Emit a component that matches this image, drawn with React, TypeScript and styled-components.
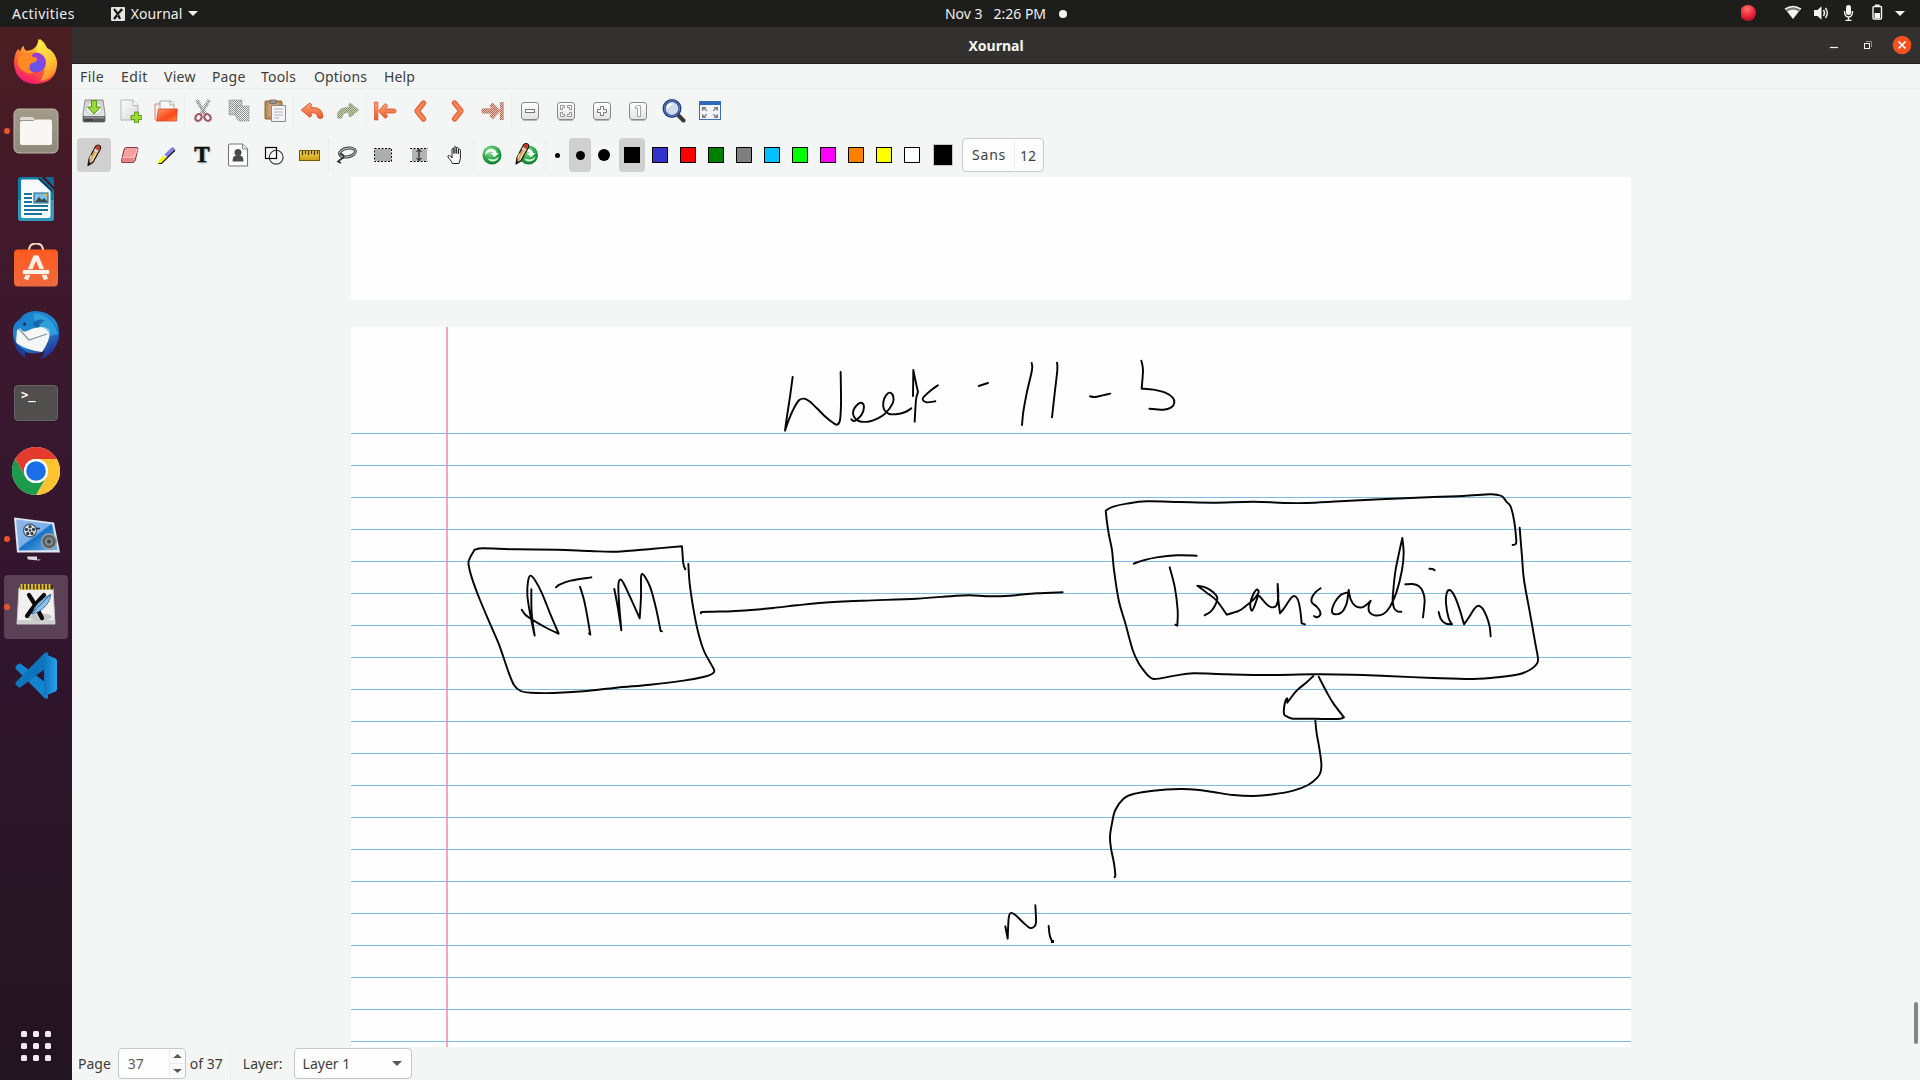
import React from 'react';
import styled, { createGlobalStyle } from 'styled-components';

const GlobalStyle = createGlobalStyle`
  * { box-sizing: border-box; }
  html, body { margin: 0; padding: 0; overflow: hidden; background: #f4f5f5; }
  svg { display: block; }
`;

const Desktop = styled.div`
  width: 1920px;
  height: 1080px;
  display: flex;
  flex-direction: column;
  font-family: 'Noto Sans', 'Open Sans', sans-serif;
  font-size: 14px;
  color: #3d3d3d;
  overflow: hidden;
`;

const TopBar = styled.header`
  height: 27px;
  flex: none;
  display: grid;
  grid-template-columns: 1fr auto 1fr;
  align-items: center;
  background: #1d1d1b;
  color: #f0f0ee;
  line-height: 26px;
`;
const TopLeft = styled.div`
  display: flex;
  align-items: center;
  padding-left: 12px;
`;
const AppMenu = styled.div`
  display: flex;
  align-items: center;
  margin-left: 36px;
  gap: 6px;
`;
const Clock = styled.div`
  display: flex;
  align-items: center;
  padding-left: 92px;
`;
const ClockDot = styled.i`
  width: 8px;
  height: 8px;
  border-radius: 50%;
  background: #f4f4f4;
  margin-left: 13px;
`;
const Tray = styled.div`
  display: flex;
  justify-content: flex-end;
  padding-right: 13px;
`;
const Text = styled.span<{ $ls?: number }>`
  letter-spacing: ${(p) => p.$ls ?? 0}px;
  white-space: pre;
`;

const Body = styled.div`
  flex: 1;
  display: flex;
  min-height: 0;
`;
const Dock = styled.nav`
  width: 72px;
  flex: none;
  display: flex;
  flex-direction: column;
  align-items: center;
  padding-top: 4px;
  gap: 4px;
  background: linear-gradient(180deg, #4b1e22 0%, #43192a 16%, #38182e 36%, #30152c 60%, #271523 85%, #221420 100%);
`;
const Tile = styled.div<{ $active?: boolean; $running?: boolean }>`
  width: 64px;
  height: 64px;
  flex: none;
  position: relative;
  border-radius: 4px;
  display: grid;
  place-items: center;
  background: ${(p) => (p.$active ? '#5a4156' : 'transparent')};
  &::before {
    content: '';
    display: ${(p) => (p.$running ? 'block' : 'none')};
    position: absolute;
    left: 0;
    top: 29px;
    width: 6px;
    height: 6px;
    border-radius: 50%;
    background: #ea5428;
  }
`;
const AppsGrid = styled.div`
  margin: auto 0 19px;
  display: grid;
  grid-template-columns: repeat(3, 6px);
  gap: 6px;
`;
const AppsDot = styled.i`
  width: 6px;
  height: 6px;
  border-radius: 1.5px;
  background: #f6eaf2;
`;

const Window = styled.main`
  flex: 1;
  min-width: 0;
  display: flex;
  flex-direction: column;
  background: #f4f5f5;
`;
const TitleBar = styled.div`
  height: 37px;
  flex: none;
  display: grid;
  grid-template-columns: 1fr auto 1fr;
  align-items: center;
  background: #323130;
  border-bottom: 1px solid #1f1e1d;
  color: #f6f6f4;
  font-weight: 700;
`;
const WindowButtons = styled.div`
  display: flex;
  justify-content: flex-end;
  padding-right: 8px;
`;
const MenuBar = styled.div`
  height: 25px;
  flex: none;
  display: flex;
  align-items: center;
  padding-left: 8px;
  border-bottom: 1px solid #eceeee;
`;
const MenuItem = styled.span<{ $w: number; $ls?: number }>`
  width: ${(p) => p.$w}px;
  letter-spacing: ${(p) => p.$ls ?? 0.15}px;
  line-height: 22px;
  padding-top: 2px;
`;
const ToolBar = styled.div`
  height: 44px;
  flex: none;
  display: flex;
  align-items: center;
  padding-left: 4px;
`;
const Slot = styled.div<{ $w?: number }>`
  width: ${(p) => p.$w ?? 36}px;
  height: 44px;
  flex: none;
  display: grid;
  place-items: center;
`;
const Pressed = styled.div<{ $w: number; $on?: boolean }>`
  width: ${(p) => p.$w}px;
  height: 34px;
  display: grid;
  place-items: center;
  border-radius: 4px;
  background: ${(p) => (p.$on ? '#d0d0d0' : 'transparent')};
`;
const Divider = styled.i`
  width: 1px;
  height: 34px;
  background: #eceeee;
`;
const Dot = styled.i<{ $d: number }>`
  width: ${(p) => p.$d}px;
  height: ${(p) => p.$d}px;
  border-radius: 50%;
  background: #000;
`;
const Swatch = styled.i<{ $c: string }>`
  width: 16px;
  height: 16px;
  border: 1px solid #000;
  background: ${(p) => p.$c};
`;
const CurrentColor = styled.i`
  width: 20px;
  height: 22px;
  margin: 0 9px 0 7px;
  background: #000;
  border: 1px solid #c6c6c6;
`;
const FontButton = styled.div`
  width: 82px;
  height: 34px;
  display: flex;
  align-items: center;
  border: 1px solid #c9c9c9;
  border-radius: 4px;
  background: #fdfdfd;
`;
const FontName = styled.span`
  width: 52px;
  height: 28px;
  line-height: 27px;
  padding-left: 9px;
  border-right: 1px solid #ececec;
  letter-spacing: 0.8px;
`;
const FontSize = styled.span`
  padding-left: 5px;
  line-height: 27px;
`;

const Canvas = styled.section`
  height: 870px;
  flex: none;
  display: flex;
  justify-content: space-between;
  padding: 0 2px 0 279px;
`;
const Pages = styled.div`
  width: 1280px;
  display: flex;
  flex-direction: column;
  gap: 27px;
`;
const Sheet = styled.div<{ $h: number }>`
  height: ${(p) => p.$h}px;
  flex: none;
  background: #fefefe;
`;
const ScrollThumb = styled.div`
  align-self: flex-end;
  width: 4px;
  height: 42px;
  margin-bottom: 3px;
  border-radius: 2px;
  background: #858585;
`;
const StatusBar = styled.footer`
  flex: 1;
  display: flex;
  align-items: flex-start;
  padding: 1px 0 0 6px;
  line-height: 31px;
`;
const Spin = styled.div`
  width: 68px;
  height: 31px;
  margin: 0 4px 0 7px;
  display: flex;
  border: 1px solid #c6c6c6;
  border-radius: 4px;
  background: #fefefe;
  color: #5c5c5c;
`;
const SpinValue = styled.span`
  width: 51px;
  padding-left: 9px;
  line-height: 29px;
  border-right: 1px solid #ececec;
`;
const Arrows = styled.span`
  flex: 1;
  display: grid;
  grid-template-rows: 1fr 1fr;
  place-items: center;
  > :first-child { border-bottom: 1px solid #ececec; }
`;
const ArrowCell = styled.span`
  width: 100%;
  height: 100%;
  display: grid;
  place-items: center;
`;
const Combo = styled.div`
  width: 118px;
  height: 31px;
  margin-left: 11px;
  padding: 0 9px 0 8px;
  display: flex;
  align-items: center;
  justify-content: space-between;
  line-height: 29px;
  border: 1px solid #c6c6c6;
  border-radius: 4px;
  background: #fefefe;
`;
const StatusDivider = styled.i`
  width: 1px;
  height: 31px;
  margin: 0 12px 0 7px;
  background: #eceeee;
`;

/* ---------- handwriting ---------- */

type Pt = [number, number];

const parse = (s: string): Pt[] =>
  s.trim().split(/\s+/).map((p) => p.split(',').map(Number) as Pt);

/* Catmull-Rom through the sampled pen points; "|" keeps a sharp corner. */
const penPath = (stroke: string) => {
  const runs = stroke.split('|').map(parse);
  let d = '';
  runs.forEach((run, r) => {
    const p = r > 0 ? [runs[r - 1][runs[r - 1].length - 1], ...run] : run;
    if (r === 0) d += `M${p[0][0]} ${p[0][1]}`;
    for (let i = 0; i < p.length - 1; i++) {
      const a = p[i - 1] ?? p[i];
      const b = p[i];
      const c = p[i + 1];
      const e = p[i + 2] ?? c;
      d += `C${b[0] + (c[0] - a[0]) / 6} ${b[1] + (c[1] - a[1]) / 6} ${c[0] - (e[0] - b[0]) / 6} ${c[1] - (e[1] - b[1]) / 6} ${c[0]} ${c[1]}`;
    }
  });
  return d;
};

const inkGroups: { x: number; y: number; strokes: string[] }[] = [
  {
    x: 760, y: 340,
    strokes: [
      '98,111 90,170 80,235 75,272 | 88,235 104,200 118,180 132,176 148,184 170,204 198,232 220,249 232,254 240,240 243,190 242,96',
      '274,238 282,243 292,238 306,222 312,200 306,189 294,192 280,212 282,230 296,243 324,245 352,236 376,220 398,190 400,170 390,158 378,166 370,186 372,208 388,222 414,222 436,216 454,205',
      '459,168 460,90 | 466,120 474,156 | 468,180 464,245',
      '534,136 514,150 492,170 488,179 500,187 526,184',
      '656,138 684,129',
      '815,69 816,90 800,160 790,215 786,255',
      '891,68 892,90 884,160 876,232',
      '990,169 1004,171 1028,166 1051,161',
      '1144,62 1149,90 1145,146 | 1180,149 1216,158 1238,173 1243,188 1234,202 1210,209 1168,206',
    ],
  },
  {
    x: 450, y: 520,
    strokes: [
      '706,148 700,130 696,79 | 610,86 500,95 420,93 320,89 200,88 100,85 78,88 72,92 57,120 56,136 66,175 90,240 124,320 148,376 174,452 192,495 212,513 240,518 310,519 400,514 500,503 600,494 700,482 760,471 786,462 793,452 784,434 762,393 744,335 730,265 719,190 715,132',
      '244,208 245,280 254,347 | 240,280 232,225 234,185 241,167 256,182 276,220 300,280 326,341 | 290,324 250,301 226,284 215,269',
      '318,202 330,193 362,182 424,172',
      '390,200 402,240 412,290 421,344 | 417,340',
      '493,207 503,260 514,331 | 508,260 505,200 509,180 520,188 548,248 569,295 | 573,230 573,175 576,162 586,172 602,205 618,265 632,333 | 636,334',
      '753,280 756,276 790,275 846,274 904,270 970,264 1040,256 1120,248 1240,242 1400,236 1510,228 1560,226 1620,229 1680,227 1760,220 1838,217',
    ],
  },
  {
    x: 1080, y: 480,
    strokes: [
      '1298,195 1308,191 1308,170 1302,120 1292,80 1280,66 1268,50 1254,45 1230,43 1150,48 1060,51 900,58 780,64 680,69 620,69 520,65 400,68 300,66 200,64 140,71 100,80 80,90 78,100 86,160 96,210 102,270 116,360 136,430 158,510 176,550 198,580 210,592 220,597 236,596 290,586 340,580 440,583 560,585 700,583 820,584 920,588 1060,594 1180,597 1260,591 1320,582 1354,567 1370,552 1374,536 1366,490 1350,400 1332,300 1326,230 1319,143',
      '161,251 190,241 230,232 290,226 350,227',
      '269,262 284,320 293,390 292,437 | 286,434',
      '374,406 392,395 406,375 412,354 400,337 376,322 352,317 | 380,338 410,362 440,404 | 476,393 500,376 524,355 536,337 530,329 519,345 511,370 514,391 520,386 530,360 536,347 550,362 566,378 580,382 590,375 595,350 593,312 | 594,350 600,400 | 612,385 630,358 641,348 652,356 660,385 665,430 | 675,433',
      '722,325 706,337 695,355 696,368 710,380 720,394 720,406 710,412 702,408',
      '800,338 782,345 764,368 756,394 766,403 786,396 800,370 804,345 806,330 | 812,358 826,378 846,382 862,372 872,362 | 866,378 868,396 884,406 910,402 930,380 950,335 966,270 971,220 967,174 | 958,215 946,275 940,330 938,360 942,384 952,394 964,395',
      '976,313 998,312 1016,318 1028,334 1034,360 1029,412',
      '1048,266 1058,267 1064,271',
      '1076,396 1082,416 1096,430 1116,433 | 1106,415 1098,370 1100,340 1109,330 1122,345 1138,385 1152,433 | 1168,410 1184,385 1196,377 1208,386 1220,410 1229,440 1232,469',
      '700,588 680,607 650,632 622,668 | 621,655 614,672 612,702 622,710 640,716 680,716 740,717 780,716 792,712 | 760,670 740,636 716,590',
    ],
  },
  {
    x: 980, y: 680,
    strokes: [
      '1006,122 1010,160 1018,205 1024,250 1022,275 1012,293 984,315 940,332 880,343 820,348 760,345 700,336 650,329 600,327 520,332 460,342 432,355 406,390 396,430 390,470 393,505 402,550 406,585 404,592',
      '76,739 83,776 | 86,715 92,699 106,705 128,726 148,743 160,742 168,728 166,676',
      '206,738 209,765 216,784 | 218,785',
    ],
  },
];

const RuledPage = () => (
  <svg width="1280" height="720" viewBox="351 327 1280 720">
    {Array.from({ length: 20 }, (_, i) => (
      <rect key={i} x="351" y={433 + i * 32} width="1280" height="1" fill="#7fbbdc" />
    ))}
    <rect x="446" y="327" width="2" height="720" fill="#f08bb8" fillOpacity=".78" />
    {inkGroups.map((g) => (
      <g key={`${g.x}-${g.y}`} transform={`translate(${g.x} ${g.y}) scale(.33333)`}
        fill="none" stroke="#050505" strokeWidth="5.8" strokeLinecap="round" strokeLinejoin="round">
        {g.strokes.map((s) => <path key={s} d={penPath(s)} />)}
      </g>
    ))}
    <rect x="1051" y="940" width="3" height="3" fill="#000" />
  </svg>
);

/* ---------- toolbar icons, 24 x 24 ---------- */

const Svg = ({ children, size = 24 }: { children: React.ReactNode; size?: number }) => (
  <svg width={size} height={size} viewBox={`0 0 ${size} ${size}`}>{children}</svg>
);

const Defs = () => (
  <svg width="0" height="0" style={{ position: 'absolute' }}>
    <defs>
      <pattern id="mesh" width="2" height="2" patternUnits="userSpaceOnUse">
        <rect width="2" height="2" fill="#f2f2f2" />
        <rect width="1" height="1" fill="#8c8c8c" /><rect x="1" y="1" width="1" height="1" fill="#8c8c8c" />
      </pattern>
      <pattern id="meshGreen" width="2" height="2" patternUnits="userSpaceOnUse">
        <rect width="2" height="2" fill="#c6d0b6" />
        <rect width="1" height="1" fill="#82966c" /><rect x="1" y="1" width="1" height="1" fill="#82966c" />
      </pattern>
      <pattern id="meshRed" width="2" height="2" patternUnits="userSpaceOnUse">
        <rect width="2" height="2" fill="#efc0ae" />
        <rect width="1" height="1" fill="#a96f5c" /><rect x="1" y="1" width="1" height="1" fill="#a96f5c" />
      </pattern>
      <linearGradient id="orange" x1="0" y1="0" x2="0" y2="1">
        <stop offset="0" stopColor="#fdab7b" /><stop offset="1" stopColor="#ee5527" />
      </linearGradient>
      <linearGradient id="folder" x1="0" y1="0" x2="1" y2="1">
        <stop offset="0" stopColor="#ff9a70" /><stop offset=".6" stopColor="#fa4a18" /><stop offset="1" stopColor="#ff8a50" />
      </linearGradient>
      <linearGradient id="drive" x1="0" y1="0" x2="0" y2="1">
        <stop offset="0" stopColor="#cfcfcf" /><stop offset="1" stopColor="#f0f0f0" />
      </linearGradient>
      <linearGradient id="paper" x1="0" y1="0" x2="1" y2="1">
        <stop offset="0" stopColor="#fff" /><stop offset="1" stopColor="#d4d5d4" />
      </linearGradient>
      <linearGradient id="key" x1="0" y1="0" x2="0" y2="1">
        <stop offset="0" stopColor="#fff" /><stop offset="1" stopColor="#e2e2e2" />
      </linearGradient>
      <linearGradient id="gold" x1="0" y1="0" x2="0" y2="1">
        <stop offset="0" stopColor="#f3d64f" /><stop offset="1" stopColor="#cf9d14" />
      </linearGradient>
      <radialGradient id="green" cx=".4" cy=".3" r=".8">
        <stop offset="0" stopColor="#8fe69a" /><stop offset=".6" stopColor="#22a045" /><stop offset="1" stopColor="#0a6c26" />
      </radialGradient>
      <radialGradient id="rec" cx=".45" cy=".25" r=".8">
        <stop offset="0" stopColor="#ff7468" /><stop offset=".6" stopColor="#ea2338" /><stop offset="1" stopColor="#a80d20" />
      </radialGradient>
      <linearGradient id="ffBody" x1=".8" y1="0" x2=".3" y2="1">
        <stop offset="0" stopColor="#fff04a" /><stop offset=".35" stopColor="#ffb02c" /><stop offset=".65" stopColor="#ff5a35" /><stop offset="1" stopColor="#f3127a" />
      </linearGradient>
      <linearGradient id="ffFlame" x1=".3" y1="0" x2=".8" y2="1">
        <stop offset="0" stopColor="#fff24d" /><stop offset=".6" stopColor="#ffc833" /><stop offset="1" stopColor="#ff8b26" />
      </linearGradient>
      <radialGradient id="ffCore" cx=".5" cy=".7" r=".7">
        <stop offset="0" stopColor="#5b5cf0" /><stop offset="1" stopColor="#a436d2" />
      </radialGradient>
      <linearGradient id="filesBg" x1="0" y1="0" x2="0" y2="1">
        <stop offset="0" stopColor="#a39a8a" /><stop offset="1" stopColor="#90897a" />
      </linearGradient>
      <linearGradient id="bagBg" x1="0" y1="0" x2="0" y2="1">
        <stop offset="0" stopColor="#ff5a1f" /><stop offset="1" stopColor="#ef6a3e" />
      </linearGradient>
      <linearGradient id="bird" x1=".2" y1="0" x2=".8" y2="1">
        <stop offset="0" stopColor="#1878cf" /><stop offset=".5" stopColor="#2390dc" /><stop offset="1" stopColor="#23238c" />
      </linearGradient>
      <linearGradient id="screen" x1="0" y1="0" x2="1" y2="1">
        <stop offset="0" stopColor="#8fb7ea" /><stop offset=".48" stopColor="#7fb0ea" /><stop offset=".52" stopColor="#1672c6" /><stop offset="1" stopColor="#6fb6ee" />
      </linearGradient>
      <linearGradient id="vsc" x1="0" y1="0" x2="1" y2="0">
        <stop offset="0" stopColor="#0f74bf" /><stop offset="1" stopColor="#2aa2ee" />
      </linearGradient>
    </defs>
  </svg>
);

const Save = () => (
  <Svg><path d="M3 1h18l2 14v7q0 1-1 1H2q-1 0-1-1v-7z" fill="url(#drive)" stroke="#858585" strokeWidth=".9" />
    <ellipse cx="12" cy="9.5" rx="8" ry="6.5" fill="#f1f1f1" stroke="#bdbdbd" strokeWidth=".7" />
    <path d="M1 17h22v5q0 1-1 1H2q-1 0-1-1z" fill="#5b5b5b" /><path d="M2 17.5h20v2H2z" fill="#8e8e8e" /><path d="M3 21h8" stroke="#222" strokeWidth="1" />
    <path d="M9.5 1.5h5v6.500h4L12 15 5.500 8h4z" fill="#9bd83d" stroke="#4f9a16" /></Svg>
);
const NewFile = () => (
  <Svg><path d="M3 1h12l5 5.500V21H3z" fill="url(#paper)" stroke="#b5b5b5" /><path d="M15 1v5.500h5" fill="#fff" stroke="#b5b5b5" />
    <path d="M16.500 13h4v3.500H24v4h-3.500V24h-4v-3.500H13v-4h3.500z" fill="#9ed531" stroke="#4e9a16" strokeWidth=".9" /></Svg>
);
const Open = () => (
  <Svg><path d="M1 21V5h5V3h7" fill="#eee" stroke="#d98b72" /><path d="M6 2h11l3 3.500V12H6z" fill="#f8f8f8" stroke="#aaa" /><path d="M16 2v4h4" fill="#fff" stroke="#aaa" />
    <path d="M4.500 10h18.800L22.500 22H2.500z" fill="url(#folder)" stroke="#d84a1e" strokeWidth=".8" /></Svg>
);
const Cut = () => (
  <Svg><path d="M6 1l8.500 14M18 1L9.500 15" stroke="url(#mesh)" strokeWidth="3.600" /><path d="M5 1l8.500 14M19 1L10.500 15" stroke="#858585" strokeWidth=".6" />
    <ellipse cx="7.500" cy="18.500" rx="3" ry="3.600" transform="rotate(35 7.500 18.500)" fill="none" stroke="#a55a68" strokeWidth="2.200" />
    <ellipse cx="16.500" cy="18.500" rx="3" ry="3.600" transform="rotate(-35 16.500 18.500)" fill="none" stroke="#a55a68" strokeWidth="2.200" /></Svg>
);
const Copy = () => (
  <Svg><path d="M2 1h13v15H2z" fill="url(#mesh)" stroke="#8a8a8a" strokeWidth=".5" /><path d="M9 7h13v15H12l-3-3z" fill="url(#mesh)" stroke="#8a8a8a" strokeWidth=".5" /></Svg>
);
const Paste = () => (
  <Svg><rect x="2" y="2" width="17" height="18" rx="1" fill="#b98b58" stroke="#8b6437" /><rect x="5" y="4" width="11" height="13" fill="#caa172" /><path d="M7 1h6v3.500H7z" fill="#999" stroke="#666" strokeWidth=".8" />
    <path d="M8.500 6.500h14v16h-14z" fill="#f3f4f5" stroke="#8b8b8b" /><path d="M11 10h9M11 13h9M11 16h9M11 19h5" stroke="#aeb4bb" /></Svg>
);
const Undo = ({ redo }: { redo?: boolean }) => (
  <Svg><g transform={redo ? 'translate(24 0) scale(-1 1)' : undefined}>
    <path d="M1.200 11L9.800 4l1.700 1.400-.8 3.200h3.600q8 .8 8.500 8.600.2 2.300-2.600 2.300-2.600 0-2.800-2.300-.5-3.400-3.700-3.400h-3l.8 3.200-1.700 1.300z" fill={redo ? 'url(#meshGreen)' : 'url(#orange)'} stroke={redo ? '#94a480' : '#e05a30'} strokeWidth={redo ? .5 : 1} strokeLinejoin="round" />
  </g></Svg>
);
const arrowHead = 'M5.500 12l6.800-7.500 2.300 2.200-2.600 3.300H21q2 0 2 2t-2 2h-9l2.600 3.300-2.300 2.200z';
const First = () => (
  <Svg><path d="M1.500 3h3.300v18H1.500z" fill="url(#orange)" stroke="#df5c31" strokeWidth=".8" />
    <path d={arrowHead} fill="url(#orange)" stroke="#df5c31" strokeLinejoin="round" strokeWidth=".9" /></Svg>
);
const Chevron = ({ next }: { next?: boolean }) => (
  <Svg><g transform={next ? 'translate(25 0) scale(-1 1)' : 'translate(-1 0)'}>
    <path d="M15.500 4L9 12l6.500 8" fill="none" stroke="#dc562c" strokeWidth="5.200" strokeLinecap="round" strokeLinejoin="round" />
    <path d="M15.500 4L9 12l6.500 8" fill="none" stroke="#fa8455" strokeWidth="3.400" strokeLinecap="round" strokeLinejoin="round" />
  </g></Svg>
);
const Last = () => (
  <Svg><g transform="translate(24 0) scale(-1 1)"><path d="M1.200 3h4v18h-4z" fill="url(#meshRed)" />
    <path d={arrowHead} fill="url(#meshRed)" stroke="url(#meshRed)" strokeWidth="1.500" /></g></Svg>
);
const Key = ({ children }: { children: React.ReactNode }) => (
  <Svg><rect x="3.500" y="3.500" width="17" height="17" rx="2.500" fill="url(#key)" stroke="#888" /><path d="M5 21.500h14" stroke="#aaa" strokeWidth=".8" />{children}</Svg>
);
const ZoomOut = () => <Key><rect x="7.500" y="10.500" width="9" height="3" fill="#fff" stroke="#777" /></Key>;
const ZoomFit = () => (
  <Key><path d="M6.500 10.500v-4h4v2h-2v2zM13.500 6.500h4v4h-2v-2h-2zM17.500 13.500v4h-4v-2h2v-2zM10.500 17.500h-4v-4h2v2h2z" fill="#fff" stroke="#888" strokeWidth=".9" /></Key>
);
const ZoomIn = () => <Key><path d="M10.500 7.500h3v3h3v3h-3v3h-3v-3h-3v-3h3z" fill="#fff" stroke="#777" /></Key>;
const ZoomOne = () => <Key><path d="M11 7l1.500-.5h2v11h-3v-8h-2v-2z" fill="#fff" stroke="#999" strokeWidth=".9" /></Key>;
const Lens = () => (
  <Svg><path d="M14.500 14.500l7 7" stroke="#3c3c3c" strokeWidth="4" strokeLinecap="round" /><circle cx="10" cy="9.500" r="8" fill="#cfdcee" stroke="#25407f" strokeWidth="3" /><circle cx="10" cy="9.500" r="7.700" fill="none" stroke="#6287c8" strokeWidth="1" />
    <path d="M5.500 9q1-4 5-4" fill="none" stroke="#fff" strokeWidth="2" /></Svg>
);
const FullScreen = () => (
  <Svg><rect x="1.500" y="2.500" width="21" height="18" fill="#f2f4f7" stroke="#3e6db5" /><path d="M1 2h22v4H1z" fill="#3268b9" />
    <path d="M4 8h4.500L7.200 9.300l2 2-1 1-2-2L4 12.200zM20 8h-4.500l1.300 1.300-2 2 1 1 2-2 2.200 1.900zM4 19h4.500l-1.300-1.300 2-2-1-1-2 2L4 14.800zM20 19h-4.500l1.300-1.300-2-2 1-1 2 2 2.200-1.900z" fill="#808285" /></Svg>
);
const PencilShape = () => (
  <>
    <path d="M13.500 3.500q2-2.300 4-1t.6 4L10.900 19.500 6 22.500 7 16z" fill="#dba35b" stroke="#111" strokeWidth="1.200" strokeLinejoin="round" />
    <path d="M14.300 3.200q1.700-1.700 3-.6t.5 3.200l-1.200 1.800-3.600-2.100z" fill="#c93a33" /><path d="M12.800 5.800l3.700 2.200-1.100 1.700-3.700-2.200z" fill="#d9d9d9" />
    <path d="M9.500 12l-1.800 4.200M14.200 10l-4.200 8" stroke="#f6e2b5" strokeWidth="1.200" /><path d="M6.500 18.800l2.200 1.300-2.600 2.200z" fill="#111" />
  </>
);
const Pencil = () => <Svg><PencilShape /></Svg>;
const Eraser = () => (
  <Svg><g transform="translate(-1 0)"><path d="M9.500 4.500h9.700q2 0 1.600 2L18.500 16q-.6 3-3 3.500H6q-1.800 0-1.300-2.500L7 7q.8-2.500 2.500-2.500z" fill="#f5a0a0" stroke="#8e3b45" strokeWidth="1.100" />
    <path d="M5.500 14.500h10.500q1.500-.2 2.200-2.500L20.500 6" fill="none" stroke="#ffc5c3" strokeWidth="1.100" /><path d="M5.500 15h10l1.500-1-1.200 4.500H5.500z" fill="#e77f83" /></g></Svg>
);
const Highlighter = () => (
  <Svg><path d="M4 18.500L10 12l4 3.500-6.500 4.500H4z" fill="#f8f800" /><path d="M10 12l7.500-7.500h2.500l1 2.500-8 8.500z" fill="#8080e0" /><path d="M10 12l3.500 3.500" stroke="#eee" strokeWidth="1.500" /><path d="M4.500 20.500h3L21 7.200" fill="none" stroke="#111" strokeWidth="1.200" /></Svg>
);
const Glyph = styled.span`
  font: 700 23px/24px 'Liberation Serif', serif;
  color: #111;
  -webkit-text-stroke: 0.5px #111;
  text-shadow: 1px 1px 2px #999;
`;
const ImageTool = () => (
  <Svg><path d="M4 1h12.500l5 5v17H4q-1.500 0-1.500-1.500v-19Q2.500 1 4 1z" fill="#fff" stroke="#777" strokeWidth="1.100" /><path d="M16.500 1v5h5" fill="#eee" stroke="#888" />
    <circle cx="12" cy="9.500" r="3.500" fill="#4a4a4a" /><path d="M6.500 18.500q0-6 3.500-6h4q3.500 0 3.500 6z" fill="#4a4a4a" /></Svg>
);
const Shapes = () => (
  <Svg><circle cx="14.200" cy="14.200" r="6.900" fill="none" stroke="#333" strokeWidth="1.100" /><rect x="3.500" y="4.500" width="11" height="11" fill="none" stroke="#000" strokeWidth="1.200" /></Svg>
);
const Ruler = () => (
  <Svg><rect x="1.500" y="7.500" width="20" height="10" fill="url(#gold)" stroke="#765a09" /><path d="M4.500 8v4M7.500 8v3M10.500 8v4M13.500 8v3M16.500 8v4M19.500 8v3" stroke="#3a2b00" strokeWidth="1.200" /></Svg>
);
const Lasso = () => (
  <Svg><ellipse cx="12.500" cy="9.500" rx="8" ry="4.300" transform="rotate(-12 12.500 9.500)" fill="none" stroke="#333" strokeWidth="3" /><ellipse cx="12.500" cy="9.500" rx="8" ry="4.300" transform="rotate(-12 12.500 9.500)" fill="none" stroke="#d5d5d5" strokeWidth="1" />
    <path d="M5 12q1-2.500 3 0t-2 4l-3 2.500 3 1.500" fill="none" stroke="#333" strokeWidth="1.700" /></Svg>
);
const RectSelect = () => (
  <Svg><rect x="4" y="6" width="16" height="12" fill="#adadad" /><rect x="3.500" y="5.500" width="17" height="13" fill="none" stroke="#000" strokeDasharray="2 1.500" /></Svg>
);
const VSpace = () => (
  <Svg><rect x="5" y="6" width="15" height="12" fill="#b4b4b4" /><path d="M3 5.500h18M3 18.500h18" stroke="#000" strokeDasharray="2 1.500" /><path d="M12 6.500v11M9.500 9L12 6.500 14.500 9M9.500 15l2.500 2.500 2.500-2.500" fill="none" stroke="#000" /></Svg>
);
const Hand = () => (
  <Svg><path d="M9 20.500c-1-2.500-3.500-5-4.500-6.500-.7-1.700 1.300-2 2.300-1L8.500 15V6.500c0-1.600 2-1.600 2 0v4V4.800c0-1.600 2.200-1.600 2.200 0v5.700-5c0-1.600 2.200-1.500 2.200 0v5.500-3.700c0-1.500 2-1.500 2 0v8c0 2-1.200 3.500-1.500 5.200z" transform="translate(.500 0)" fill="#fff" stroke="#222" strokeWidth="1" /></Svg>
);
const RefreshShape = () => (
  <><circle cx="12" cy="12" r="9.500" fill="url(#green)" /><path d="M5 12q0-6 6.500-6.300Q16 6 16.500 10H19l-4.500 4.300L10.500 10H13q-.7-1.700-2.500-1.500Q8 9 5 12z" fill="#f4fff4" /><path d="M19 13.500q-1.200 5-6.500 5-3.500-.2-5-3l4 .8q4 .8 7.500-2.800z" fill="#d7f6da" /></>
);
const Refresh = () => <Svg><RefreshShape /></Svg>;
const PenRefresh = () => (
  <Svg><g transform="translate(1.500 0)"><RefreshShape /></g><g transform="translate(-5 -1.500)"><PencilShape /></g></Svg>
);

const Triangle = ({ up, w = 10, h = 5, c = '#5a5a5a' }: { up?: boolean; w?: number; h?: number; c?: string }) => (
  <svg width={w} height={h} viewBox="0 0 10 5" preserveAspectRatio="none"><path d={up ? 'M0 5L5 0l5 5z' : 'M0 0h10L5 5z'} fill={c} /></svg>
);

/* ---------- dock icons, 48 x 48 ---------- */

const D = ({ children }: { children: React.ReactNode }) => <Svg size={48}>{children}</Svg>;

const Firefox = () => (
  <D><g transform="translate(0 -1)"><path d="M3 18q1-5 4-7 0 2 1 3 2-5 4-6 0 4 3 5 5 0 8-3 3-2 4-9 4 2 6 7 3 1 4 4l1-1q7 6 8 14Q46 46 24 47 3 46 2 25q0-4 1-7z" transform="scale(.98)" fill="url(#ffBody)" />
    <path d="M28 1q5 3 7 9 7 4 9 10 2 9-3 16-5 6-13 7 7-9 4-20-3-7-9-8 2-8 5-14z" fill="url(#ffFlame)" opacity=".85" />
    <circle cx="24" cy="24.500" r="10" fill="url(#ffCore)" />
    <path d="M6 20q3-4 8-3 3-3 9-2-5 2-2 4 5 0 4 3-2 3-6 3-4 6 2 10-8 2-14-6-2-4-1-9z" fill="#ff8a24" /></g></D>
);
const Files = () => (
  <D><rect x="2" y="2" width="44" height="44" rx="5" fill="url(#filesBg)" stroke="#c0b9ab" /><path d="M8 12q0-2 2-2h10q2 0 3 3H8z" fill="#ddd9d2" /><path d="M8 16q0-2 2-2h11l3-1.500h14q2 0 2 2V36q0 2-2 2H10q-2 0-2-2z" fill="#f9f7f4" /></D>
);
const Writer = () => (
  <D><path d="M9 2h20L42 15v28q0 3-3 3H9q-3 0-3-3V5q0-3 3-3z" fill="#107ba6" /><path d="M33 2h7q2 0 2 2v8z" fill="#0d6f99" /><path d="M6 25h36v18q0 3-3 3H9q-3 0-3-3z" fill="#3296bf" />
    <path d="M10 4.500h16.500L38.500 16v25q0 2-2 2H11q-2 0-2-2V6q0-1.500 1-1.500z" fill="#f6fbfd" /><path d="M27 2l14 14-1 1L26 4z" fill="#083b52" />
    <path d="M12 19h8M12 23h8M12 27h8M12 31h24M12 35h24M12 39h18" stroke="#1c6f95" strokeWidth="2" /><rect x="22" y="18" width="14" height="10" fill="#7fc2e4" stroke="#175f80" /><path d="M23 27l4-5 3 3 2-2 4 4z" fill="#374a46" /><circle cx="34" cy="20" r="1.500" fill="#f4b32e" /></D>
);
const Software = () => (
  <D><g transform="translate(0 -1.500)"><path d="M17 9q0-7 7-7t7 7" fill="none" stroke="#f2d8bd" strokeWidth="2" /><rect x="2" y="8" width="44" height="37" rx="4" fill="url(#bagBg)" />
    <path d="M14 38l9-22h2l9 22" fill="none" stroke="#fdeee6" strokeWidth="4.500" strokeLinejoin="round" /><rect x="10" y="28" width="28" height="5" rx="2.500" fill="#fff3ec" stroke="#ee5c2b" strokeWidth=".8" /></g></D>
);
const Thunderbird = () => (
  <D><path d="M1 20Q1 12 8 8q4-7 14-8 16 0 23 12 5 12-1 23-5 10-16 13 4-4 5-8Q20 46 9 38 0 30 1 20z" fill="url(#bird)" />
    <path d="M5 19l6-3 25-2 2 6q0 10-8 21-13-1-26-9z" fill="#f5f6f8" />
    <path d="M7 18l10 11 18-6" fill="none" stroke="#8a929b" strokeWidth="1.200" />
    <path d="M8 16q0-9 8-14 13-4 23 6 7 7 7 16l-6-3q-5-6-12-5-8 1-13 4-5 2-7-4z" fill="#1c83cd" />
    <path d="M22 2q12 0 20 12l4 9-8 2q-2-8-9-9-9-3-7-14z" fill="#36a9e2" opacity=".7" />
    <path d="M21 12q4-5 12-3-5 3-7 8-3-1-5-5z" fill="#124a8c" opacity=".6" />
    <circle cx="12.500" cy="13" r="1.500" fill="#13273c" />
    <path d="M1 26q1 13 12 21-1-4 1-7Q6 36 1 26z" fill="#1b3f9a" /></D>
);
const Prompt = styled.div`
  width: 44px;
  height: 36px;
  padding-left: 6px;
  border: 1px solid #666563;
  border-radius: 4px;
  background: #504f4d;
  color: #fff;
  font: 700 12px/18px 'DejaVu Sans Mono', 'Liberation Mono', monospace;
`;
const Chrome = () => (
  <D><circle cx="24" cy="24" r="24" fill="#fff" /><path d="M3.200 12A24 24 0 0 1 44.800 12H24a12 12 0 0 0-10.400 18z" fill="#e33b2e" /><path d="M44.800 12A24 24 0 0 1 24 48l10.400-18A12 12 0 0 0 24 12z" fill="#fdc430" /><path d="M24 48A24 24 0 0 1 3.200 12l10.400 18a12 12 0 0 0 20.800 0z" fill="#1d9b4d" />
    <circle cx="24" cy="24" r="12" fill="#fff" /><circle cx="24" cy="24" r="9.800" fill="#1a6fe8" /></D>
);
const Kazam = () => (
  <D><g transform="translate(0 1.500)"><path d="M2 1l40 5 6 30-43 0z" fill="#dde6ef" /><path d="M4 3l36 4.500 5.500 26L7 34z" fill="url(#screen)" /><path d="M15 40h10v3h4l-2 1-11-1z" fill="#d7d9db" />
    <circle cx="18" cy="14" r="7" fill="#4b5660" /><circle cx="18" cy="14" r="5.800" fill="#e8edf0" /><g fill="#37434c"><circle cx="18" cy="14" r="1.300" /><circle cx="18" cy="10.300" r="1.700" /><circle cx="21.500" cy="13" r="1.700" /><circle cx="20" cy="17" r="1.700" /><circle cx="15.800" cy="17" r="1.700" /><circle cx="14.500" cy="13" r="1.700" /></g>
    <path d="M24 12h4" stroke="#333" strokeWidth="1.500" /><circle cx="37" cy="25" r="7.500" fill="#5b6063" stroke="#9fa5a8" strokeWidth="1.500" /><circle cx="37" cy="25" r="4" fill="#868c90" /><circle cx="37" cy="25" r="2" fill="#3f4447" /></g></D>
);
const XournalIcon = () => (
  <D><path d="M7 5h34l2 36H5z" fill="#f1f1f0" stroke="#c9c9c9" /><path d="M5 37h38v4H5z" fill="#cfcfcd" /><ellipse cx="28" cy="34" rx="12" ry="3.500" fill="#aaa" opacity=".6" />
    <path d="M8 2.500h33v4H8z" fill="#473808" /><path d="M9.500 1v6M13 1v6M16.500 1v6M20 1v6M23.500 1v6M27 1v6M30.500 1v6M34 1v6M37.500 1v6" stroke="#e8c632" strokeWidth="1.800" />
    <path d="M17 12q6 9 13 23M32 12Q24 20 15 33" stroke="#0a0a0a" strokeWidth="4.200" fill="none" strokeLinecap="round" /><path d="M20 31q3-12 19-20-1 11-13 18z" fill="#8fbfe2" stroke="#2b5f94" strokeWidth=".8" /><path d="M38 12L18 32" stroke="#2d639a" strokeWidth="1" /></D>
);
const VSCode = () => (
  <D><path d="M4 15.500q-1.500-1.500 0-3l2.200-2q1.300-1 2.800 0L36 31v14h-3z" transform="translate(0 2.500)" fill="#1483d0" /><path d="M4 32.500q-1.500 1.500 0 3l2.200 2q1.300 1 2.800 0L36 17V3h-3z" transform="translate(0 -1.500)" fill="#0d75bc" /><path d="M33 3l10.500 4.500Q45 8.300 45 10v28q0 1.700-1.500 2.500L33 45q-1 0-1-1.500v-39Q32 3 33 3z" fill="url(#vsc)" /></D>
);

const swatches = ['#000000', '#3333cc', '#ff0000', '#008000', '#808080', '#00c0ff', '#00ff00', '#ff00ff', '#ff8000', '#ffff00', '#ffffff'];
const fileTools = [[Save, NewFile, Open], [Cut, Copy, Paste]];

export default function App() {
  return (
    <Desktop>
      <GlobalStyle />
      <Defs />
      <TopBar>
        <TopLeft>
          <Text $ls={0.45}>Activities</Text>
          <AppMenu>
            <svg width="14" height="14" viewBox="0 0 14 14"><rect width="14" height="14" rx="1" fill="#e4e4e2" /><path d="M3 2q4 4 6 10M11 2Q7 7 3 12" fill="none" stroke="#111" strokeWidth="2.200" /><path d="M6 9l6-6" stroke="#777" /></svg>
            <Text $ls={0.05}>Xournal</Text>
            <Triangle c="#f0f0ee" />
          </AppMenu>
        </TopLeft>
        <Clock><Text>{'Nov 3   2:26 PM'}</Text><ClockDot /></Clock>
        <Tray>
          <svg width="166" height="27" viewBox="1741 0 166 27" fill="#f4f4f4">
            <circle cx="1748" cy="13" r="8" fill="url(#rec)" />
            <path d="M1785.500 9.500q7.500-5 15 0l-7.500 9.500z" /><path d="M1785.500 9.500q7.500-5 15 0l-1.600 2q-6-3.800-11.800 0z" fill="#777" /><path d="M1785 9.200q8-5.500 16 0" fill="none" stroke="#f4f4f4" strokeWidth="1.500" />
            <path d="M1814 10h3.500l4-3.800v13.600l-4-3.800h-3.500z" /><path d="M1823.500 10q2 3 0 6M1825.500 8q3.500 5 0 10" fill="none" stroke="#f4f4f4" strokeWidth="1.400" />
            <rect x="1846" y="5" width="5" height="10" rx="2.500" /><path d="M1844.500 11q0 6 4 6t4-6M1848.500 17v3M1845.500 20.300h6" fill="none" stroke="#f4f4f4" strokeWidth="1.300" />
            <rect x="1873" y="6.500" width="8.500" height="12.500" rx="1" fill="none" stroke="#f4f4f4" strokeWidth="1.400" /><rect x="1875" y="4.500" width="4.500" height="2" /><rect x="1874.500" y="13" width="5.500" height="5" />
            <path d="M1895 11h10l-5 5z" />
          </svg>
        </Tray>
      </TopBar>
      <Body>
        <Dock>
          <Tile><Firefox /></Tile>
          <Tile $running><Files /></Tile>
          <Tile><Writer /></Tile>
          <Tile><Software /></Tile>
          <Tile><Thunderbird /></Tile>
          <Tile><Prompt>&gt;_</Prompt></Tile>
          <Tile><Chrome /></Tile>
          <Tile $running><Kazam /></Tile>
          <Tile $running $active><XournalIcon /></Tile>
          <Tile><VSCode /></Tile>
          <AppsGrid>{Array.from({ length: 9 }, (_, i) => <AppsDot key={i} />)}</AppsGrid>
        </Dock>
        <Window>
          <TitleBar>
            <span />
            <Text>Xournal</Text>
            <WindowButtons>
              <svg width="84" height="30" viewBox="1828 30 84 30">
                <path d="M1830 47.500h8" stroke="#f4f4f4" strokeWidth="1.200" /><rect x="1864.500" y="43.500" width="5" height="5" fill="none" stroke="#f4f4f4" /><path d="M1866 41.500h5.500v5.500" fill="none" stroke="#8d8c8b" />
                <circle cx="1902" cy="45" r="9.300" fill="#f4511e" /><path d="M1898.500 41.500l7 7M1905.500 41.500l-7 7" stroke="#fff" strokeWidth="1.700" />
              </svg>
            </WindowButtons>
          </TitleBar>
          <MenuBar>
            <MenuItem $w={41} $ls={0.4}>File</MenuItem>
            <MenuItem $w={43} $ls={0.4}>Edit</MenuItem>
            <MenuItem $w={48} $ls={0.3}>View</MenuItem>
            <MenuItem $w={49}>Page</MenuItem>
            <MenuItem $w={53} $ls={0.2}>Tools</MenuItem>
            <MenuItem $w={70}>Options</MenuItem>
            <MenuItem $w={50}>Help</MenuItem>
          </MenuBar>
          <ToolBar>
            {fileTools.map((group, g) => (
              <React.Fragment key={g}>
                {group.map((Icon, i) => <Slot key={i}><Icon /></Slot>)}
                <Divider />
              </React.Fragment>
            ))}
            <Slot><Undo /></Slot><Slot><Undo redo /></Slot>
            <Divider />
            <Slot><First /></Slot><Slot><Chevron /></Slot><Slot><Chevron next /></Slot><Slot><Last /></Slot>
            <Divider />
            <Slot><ZoomOut /></Slot><Slot><ZoomFit /></Slot><Slot><ZoomIn /></Slot><Slot><ZoomOne /></Slot><Slot><Lens /></Slot><Slot><FullScreen /></Slot>
          </ToolBar>
          <ToolBar>
            <Slot><Pressed $w={34} $on><Pencil /></Pressed></Slot>
            <Slot><Eraser /></Slot><Slot><Highlighter /></Slot><Slot><Glyph>T</Glyph></Slot><Slot><ImageTool /></Slot><Slot><Shapes /></Slot><Slot><Ruler /></Slot>
            <Divider />
            <Slot><Lasso /></Slot><Slot><RectSelect /></Slot><Slot><VSpace /></Slot><Slot><Hand /></Slot>
            <Divider />
            <Slot $w={35}><Refresh /></Slot><Slot $w={36}><PenRefresh /></Slot>
            <Divider />
            <Slot $w={22}><Dot $d={5} /></Slot>
            <Slot $w={24}><Pressed $w={22} $on><Dot $d={9} /></Pressed></Slot>
            <Slot $w={24}><Dot $d={12} /></Slot>
            <Slot $w={2} />
            {swatches.map((c, i) => (
              <Slot key={c} $w={28}><Pressed $w={26} $on={i === 0}><Swatch $c={c} /></Pressed></Slot>
            ))}
            <CurrentColor />
            <FontButton><FontName>Sans</FontName><FontSize>12</FontSize></FontButton>
          </ToolBar>
          <Canvas>
            <Pages>
              <Sheet $h={123} />
              <Sheet $h={720}><RuledPage /></Sheet>
            </Pages>
            <ScrollThumb />
          </Canvas>
          <StatusBar>
            <Text>Page</Text>
            <Spin>
              <SpinValue>37</SpinValue>
              <Arrows><ArrowCell><Triangle up w={9} h={4} /></ArrowCell><ArrowCell><Triangle w={9} h={4} /></ArrowCell></Arrows>
            </Spin>
            <Text>of 37</Text>
            <StatusDivider />
            <Text>Layer:</Text>
            <Combo><Text>Layer 1</Text><Triangle /></Combo>
          </StatusBar>
        </Window>
      </Body>
    </Desktop>
  );
}
